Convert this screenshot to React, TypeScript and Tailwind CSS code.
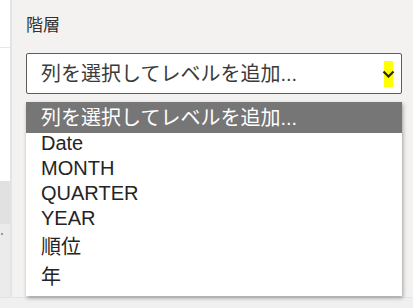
const items = [
  { label: 'Date', h: 'h-[25px] pb-[5px]' },
  { label: 'MONTH', h: 'h-[25px] pb-[5px]' },
  { label: 'QUARTER', h: 'h-[25px] pb-[5px]' },
  { label: 'YEAR', h: 'h-[25px] pb-[5px]' },
  { label: '順位', h: 'h-[30px] pb-[2px]' },
  { label: '年', h: 'h-[30px] pb-[2px]' },
];

export default function App() {
  const placeholder = '列を選択してレベルを追加...';

  return (
    <div className="w-[413px] h-[308px] bg-[#f0f0f0] flex flex-col overflow-hidden font-['Liberation_Sans','Noto_Sans_CJK_JP',sans-serif]">
      <div className="flex h-[298px] border-b border-[#e3e3e3]">
        {/* left pane edge */}
        <div className="w-[10px] flex flex-col">
          <div className="h-[48px] bg-white border-b border-[#e6e6e6]" />
          <div className="h-[133px] bg-white" />
          <div className="h-[43px] bg-[#e1e1e1]" />
          <div className="flex-1 bg-[#ebebeb] pt-[9px] pl-[1px]">
            <div className="w-[2px] h-[2px] bg-[#9a9a9a]" />
          </div>
        </div>
        <div className="w-[2px] bg-[#e4e4e4]" />

        {/* field panel */}
        <div className="flex-1 bg-[#f3f2f1] pl-[14px] pr-[11px] pt-[13px]">
          <div className="text-[17px] leading-[25px] text-[#323130]">階層</div>

          <div className="mt-[15px] h-[41px] bg-white border border-[#605e5c] rounded-[2px] flex items-center pl-[14px] pr-[8px]">
            <span className="flex-1 text-[20px] text-[#3b3a39] whitespace-nowrap">{placeholder}</span>
            <span className="w-[9px] h-[26px] bg-[#ffff00] flex items-center justify-center">
              <svg width="13" height="8" viewBox="0 0 13 8" fill="none" className="shrink-0">
                <path d="M1.5 1.5l5 5 5-5" stroke="#252423" strokeWidth="2.2" />
              </svg>
            </span>
          </div>

          <div className="mt-[8px] h-[194px] bg-white shadow-[1px_2px_4px_rgba(0,0,0,0.35)] flex flex-col text-[20px] text-[#252423]">
            <div className="h-[31px] shrink-0 bg-[#767676] text-white flex items-center pl-[15px] whitespace-nowrap">
              {placeholder}
            </div>
            {items.map((item) => (
              <div key={item.label} className={`${item.h} shrink-0 flex items-center pl-[15px]`}>
                {item.label}
              </div>
            ))}
          </div>
        </div>
      </div>
    </div>
  );
}
